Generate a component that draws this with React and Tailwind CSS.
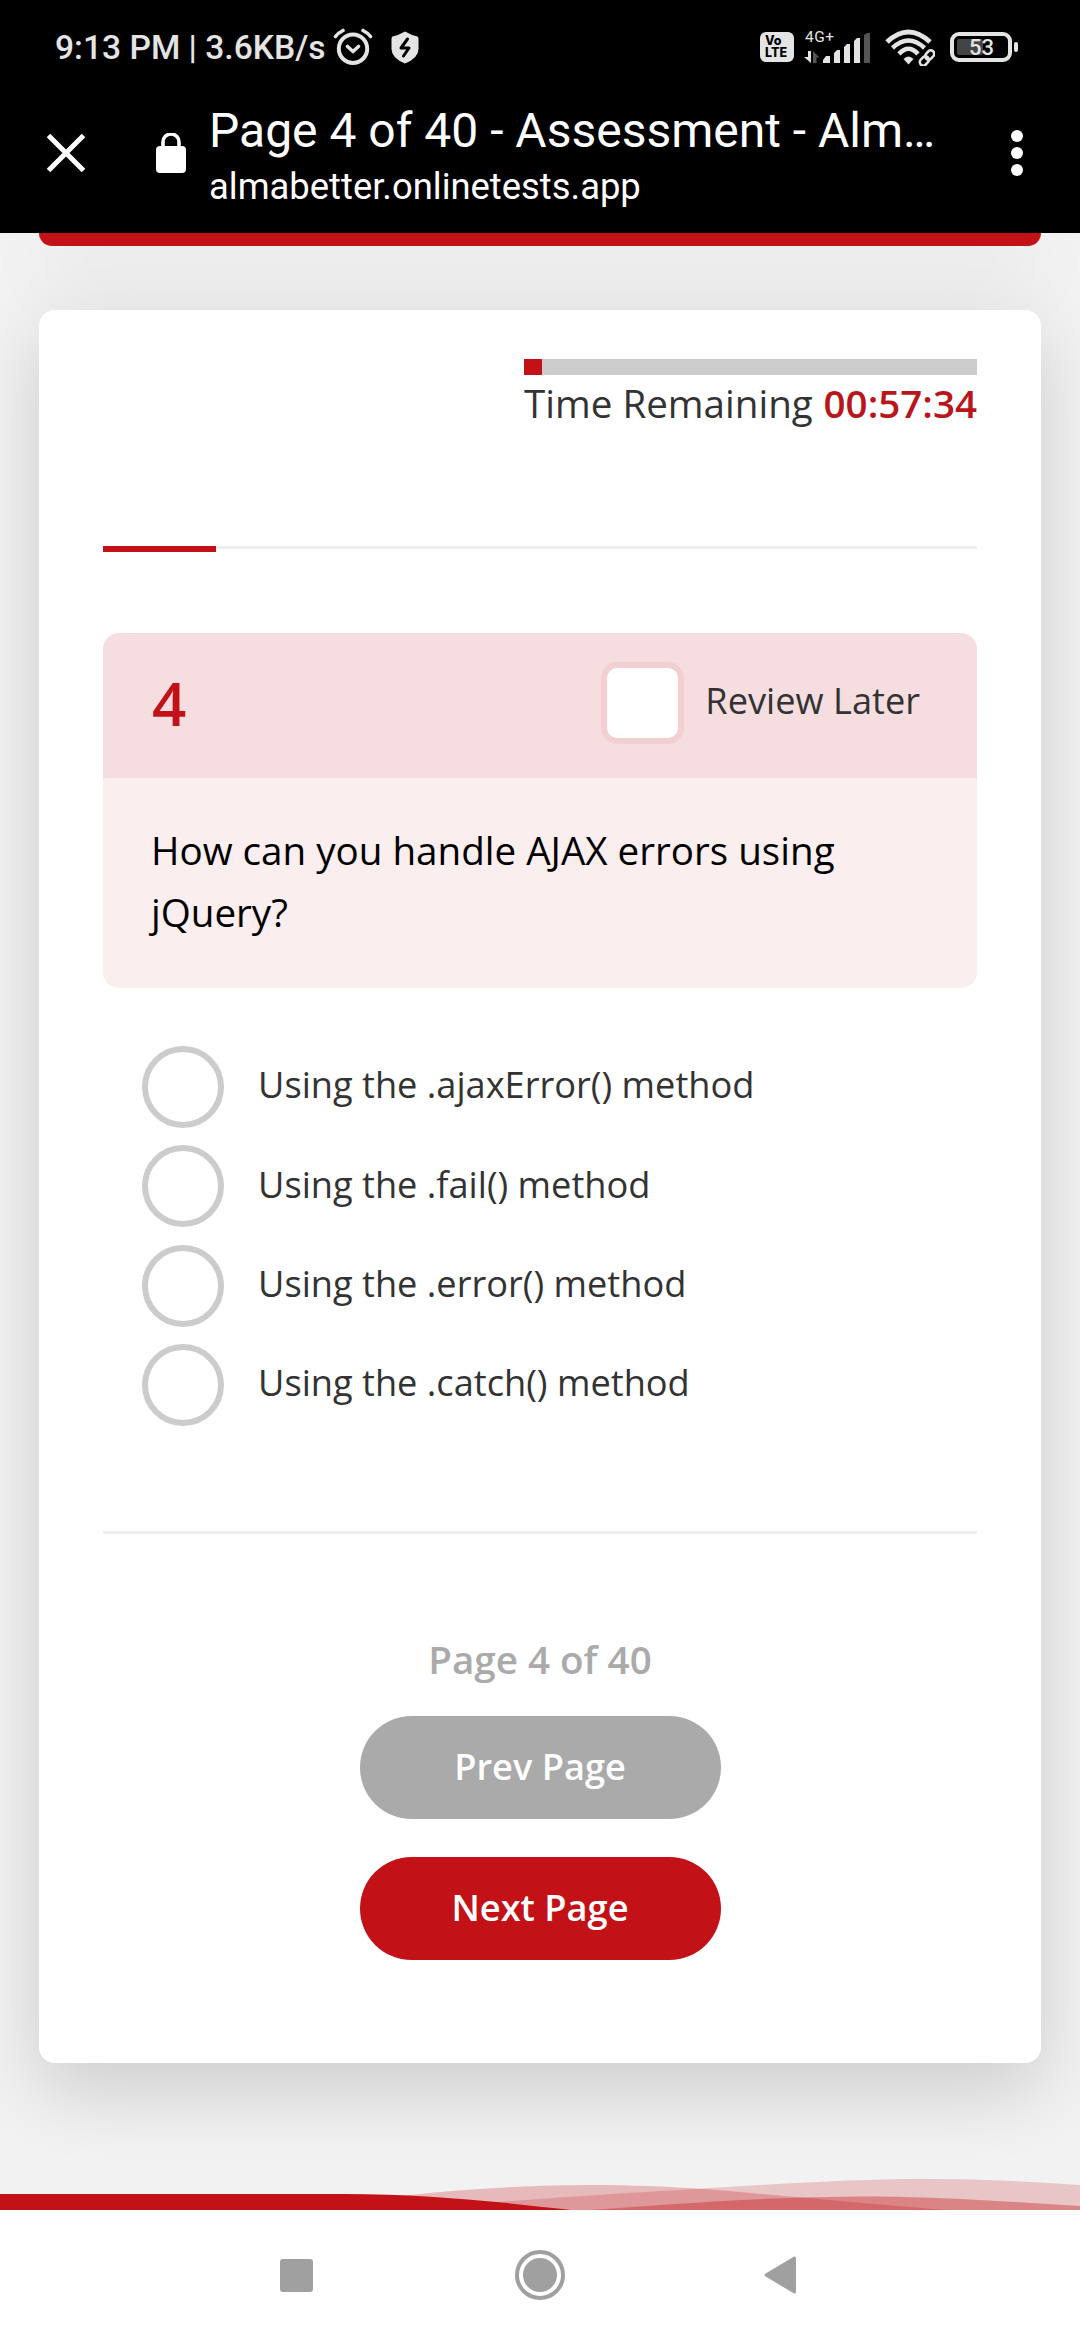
const RED = "#c21217";

function Alarm() {
  return (
    <svg className="ml-[7px] h-[38px] w-[40px]" viewBox="0 0 40 38" fill="none" stroke="#e4e4e4" strokeLinecap="round">
      <circle cx="20" cy="20.7" r="14.2" strokeWidth="4" />
      <path d="M14.5 18.5 L20 23.5 L25.5 18.5" strokeWidth="3.6" strokeLinejoin="round" />
      <path d="M2.5 8.5 Q5 5 10 2.5" strokeWidth="3.6" />
      <path d="M37.5 8.5 Q35 5 30 2.5" strokeWidth="3.6" />
    </svg>
  );
}

function Shield() {
  return (
    <svg className="ml-[18px] h-[33px] w-[28px]" viewBox="0 0 28 33">
      <path d="M14 .5 Q20 4 26.5 5.5 Q27.5 6 27.5 8 V18 Q27.5 27 14 32.5 Q.5 27 .5 18 V8 Q.5 6 1.5 5.5 Q8 4 14 .5Z" fill="#e4e4e4" />
      <path d="M16.5 8 L10 17 H18 L12.5 25" fill="none" stroke="#000" strokeWidth="3" strokeLinejoin="round" strokeLinecap="round" />
    </svg>
  );
}

function Volte() {
  return (
    <div className="flex h-[30px] w-[34px] flex-col items-start justify-center rounded-[6px] bg-[#e4e4e4] pl-[5px] font-['Inter',sans-serif] text-[12.5px] leading-[12.5px] font-extrabold text-black">
      <span>Vo</span>
      <span>LTE</span>
    </div>
  );
}

function Signal() {
  return (
    <svg className="ml-[10px] h-[36px] w-[67px]" viewBox="0 0 67 36">
      <text x="1" y="13" fontSize="15.5" fontFamily="Roboto, sans-serif" fill="#e4e4e4" textLength="29">4G+</text>
      <path d="M4 22 H7 V34 L0 28 H4Z" fill="#e4e4e4" />
      <path d="M9 34 V22 L15.5 28.5 H12.5 V34Z" fill="#555" />
      <path d="M19 34 V31 L22 27 H26 V34Z M30 34 V24 L33 21 H36 V34Z M40 34 V18 L43 15 H46 V34Z M50 34 V12 L53 9 H56 V34Z" fill="#e4e4e4" />
      <path d="M60 34 V6 L63 4 H66 V34Z" fill="#555" />
    </svg>
  );
}

function Wifi() {
  return (
    <svg className="ml-[14px] h-[38px] w-[50px]" viewBox="0 0 50 38" fill="none" stroke="#e4e4e4">
      <path d="M2 14 Q23.5 -6 45 14" strokeWidth="5" />
      <path d="M7.5 20 Q23.5 5 39.5 20" strokeWidth="4.5" />
      <path d="M14 26 Q23.5 15.5 33 26" strokeWidth="4.5" />
      <path d="M18.5 31 Q23.5 26 28.5 31 L23.5 36.5Z" fill="#e4e4e4" stroke="none" />
      <g transform="rotate(-48 42 30)" strokeWidth="2.6">
        <rect x="33" y="26.5" width="10" height="7" rx="3.5" stroke="#000" strokeWidth="6" />
        <rect x="33" y="26.5" width="10" height="7" rx="3.5" />
        <rect x="41" y="26.5" width="10" height="7" rx="3.5" />
      </g>
    </svg>
  );
}

function Battery() {
  return (
    <div className="ml-[15px] flex items-center gap-[2px]">
      <div className="flex h-[30px] w-[62px] items-center rounded-[9px] border-4 border-[#e4e4e4] pl-[3px]">
        <div className="flex h-[16px] w-[26px] items-center rounded-[2px] bg-[#444]">
          <span className="ml-[12px] pt-[2px] font-['Roboto',sans-serif] text-[22px] leading-none font-medium text-[#e4e4e4]">53</span>
        </div>
      </div>
      <div className="h-[10px] w-[4px] rounded-[2px] bg-[#e4e4e4]" />
    </div>
  );
}

function Header() {
  return (
    <header className="h-[233px] shrink-0 bg-black text-white">
      <div className="flex h-[94px] items-center pr-[62px] pl-[55px]">
        <span className="pt-[2px] font-['Roboto',sans-serif] text-[33.6px] leading-[40px] font-medium whitespace-pre text-[#e4e4e4]">9:13 PM | 3.6KB/s</span>
        <Alarm />
        <Shield />
        <div className="flex-1" />
        <Volte />
        <Signal />
        <Wifi />
        <Battery />
      </div>
      <div className="flex h-[118px] items-center">
        <svg className="ml-[46px] h-[40px] w-[40px]" viewBox="0 0 40 40" stroke="#fff" strokeWidth="5">
          <path d="M2.5 2.5 L37.5 37.5 M37.5 2.5 L2.5 37.5" />
        </svg>
        <svg className="ml-[70px] h-[40px] w-[30px]" viewBox="0 0 30 40">
          <path d="M7 15 V9 a8 8 0 0 1 16 0 V15" fill="none" stroke="#fff" strokeWidth="3.6" />
          <rect x="0" y="13" width="30" height="27" rx="4" fill="#fff" />
        </svg>
        <div className="ml-[23px] flex w-[740px] flex-col pt-[11px] font-['Roboto',sans-serif] whitespace-nowrap">
          <span className="text-[48px] leading-[56px]">Page 4 of 40 - Assessment - Alm…</span>
          <span className="text-[36.4px] leading-[56px]">almabetter.onlinetests.app</span>
        </div>
        <div className="ml-[62px] flex flex-col gap-[5px]">
          <i className="h-[12px] w-[12px] rounded-full bg-white" />
          <i className="h-[12px] w-[12px] rounded-full bg-white" />
          <i className="h-[12px] w-[12px] rounded-full bg-white" />
        </div>
      </div>
    </header>
  );
}

const OPTIONS = [
  "Using the .ajaxError() method",
  "Using the .fail() method",
  "Using the .error() method",
  "Using the .catch() method",
];

function Question() {
  return (
    <section className="mt-[81px] overflow-hidden rounded-[16px]">
      <div className="flex h-[145px] items-center justify-between bg-[#f6dee0] pr-[57px] pb-[5px] pl-[49px]">
        <span className="text-[60px] leading-[82px] font-semibold text-[#c21217]">4</span>
        <label className="flex items-center gap-[21px]">
          <span className="h-[82px] w-[83px] rounded-[16px] border-[6px] border-[#f2cfd1] bg-white" />
          <span className="pb-[6px] text-[36.2px] text-[#333]">Review Later</span>
        </label>
      </div>
      <p className="h-[210px] bg-[#faeeee] px-[48px] pt-[41px] text-[38.6px] leading-[62px] text-black">
        How can you handle AJAX errors using<br />jQuery?
      </p>
    </section>
  );
}

function Card() {
  return (
    <main className="mx-[39px] mt-[64px] flex h-[1753px] shrink-0 flex-col rounded-[16px] bg-white px-[64px] pt-[49px] shadow-[0_27px_75px_rgba(0,0,0,0.155)]">
      <div className="ml-auto w-[453px]">
        <div className="h-[16px] bg-[#ccc]">
          <div className="h-full w-[18px] bg-[#c21217]" />
        </div>
        <div className="flex h-[60px] items-center justify-between pb-[2px] text-[38.6px] whitespace-nowrap text-[#333]">
          <span>Time Remaining</span>
          <span className="font-semibold text-[#b9161c]">00:57:34</span>
        </div>
      </div>
      <div className="mt-[111px] h-[6px]">
        <div className="h-[3px] bg-[#eee]">
          <div className="h-[6px] w-[113px] bg-[#c21217]" />
        </div>
      </div>
      <Question />
      <div className="mt-[58px] flex flex-col gap-[17.3px] pl-[39px]">
        {OPTIONS.map((o) => (
          <label key={o} className="flex h-[82px] items-center gap-[34px]">
            <span className="h-[82px] w-[82px] rounded-full border-[6px] border-[#ccc]" />
            <span className="pb-[5px] text-[36.2px] text-[#333]">{o}</span>
          </label>
        ))}
      </div>
      <div className="mt-[105px] h-[3px] bg-[#eee]" />
      <nav className="mt-[96px] flex flex-col items-center font-semibold">
        <div className="h-[86px] text-[38.6px] leading-[58px] text-[#aaa]">Page 4 of 40</div>
        <button className="h-[103px] w-[361px] rounded-full bg-[#aaa] pb-[2px] text-[36.2px] text-white">Prev Page</button>
        <button className="mt-[38px] h-[103px] w-[361px] rounded-full bg-[#c21217] pb-[2px] text-[36.2px] text-white">Next Page</button>
      </nav>
    </main>
  );
}

function Waves() {
  return (
    <svg className="mt-auto h-[40px] w-[1080px] shrink-0" viewBox="0 2170 1080 40" fill={RED}>
      <path d="M380 2210 L406 2195.5 C470 2188 540 2185 595 2185 C700 2185.5 760 2195 805 2197.7 C860 2203 910 2207 948 2210Z" opacity=".25" />
      <path d="M380 2210 C540 2199 600 2194.5 695 2189 C790 2183 860 2179 920 2179 C980 2179 1030 2181.5 1080 2185 V2210Z" opacity=".2" />
      <path d="M590 2210 C680 2204 760 2196.5 875 2196.5 C950 2197 1010 2202 1080 2206 V2210Z" opacity=".36" />
      <path d="M0 2194 H330 C420 2193 500 2202 571 2210 H0Z" />
    </svg>
  );
}

export default function App() {
  return (
    <div className="flex h-[2340px] w-[1080px] flex-col overflow-hidden bg-[#f2f2f2] font-['Open_Sans',sans-serif]">
      <div className="flex h-[2210px] flex-col overflow-hidden">
        <Header />
        <div className="mx-[39px] h-[13px] shrink-0 rounded-b-[16px] bg-[#c21217] shadow-[0_27px_75px_rgba(0,0,0,0.155)]" />
        <Card />
        <Waves />
      </div>
      <footer className="flex h-[130px] items-center bg-white">
        <div className="ml-[280px] h-[33px] w-[33px] rounded-[3px] bg-[#a0a0a0]" />
        <div className="ml-[202px] flex h-[50px] w-[50px] items-center justify-center rounded-full border-4 border-[#a0a0a0]">
          <div className="h-[34px] w-[34px] shrink-0 rounded-full bg-[#a0a0a0]" />
        </div>
        <svg className="ml-[199px] h-[38px] w-[32px]" viewBox="0 0 32 38">
          <path d="M2 19 L30.5 2 V36Z" fill="#a0a0a0" stroke="#a0a0a0" strokeWidth="3" strokeLinejoin="round" />
        </svg>
      </footer>
    </div>
  );
}
